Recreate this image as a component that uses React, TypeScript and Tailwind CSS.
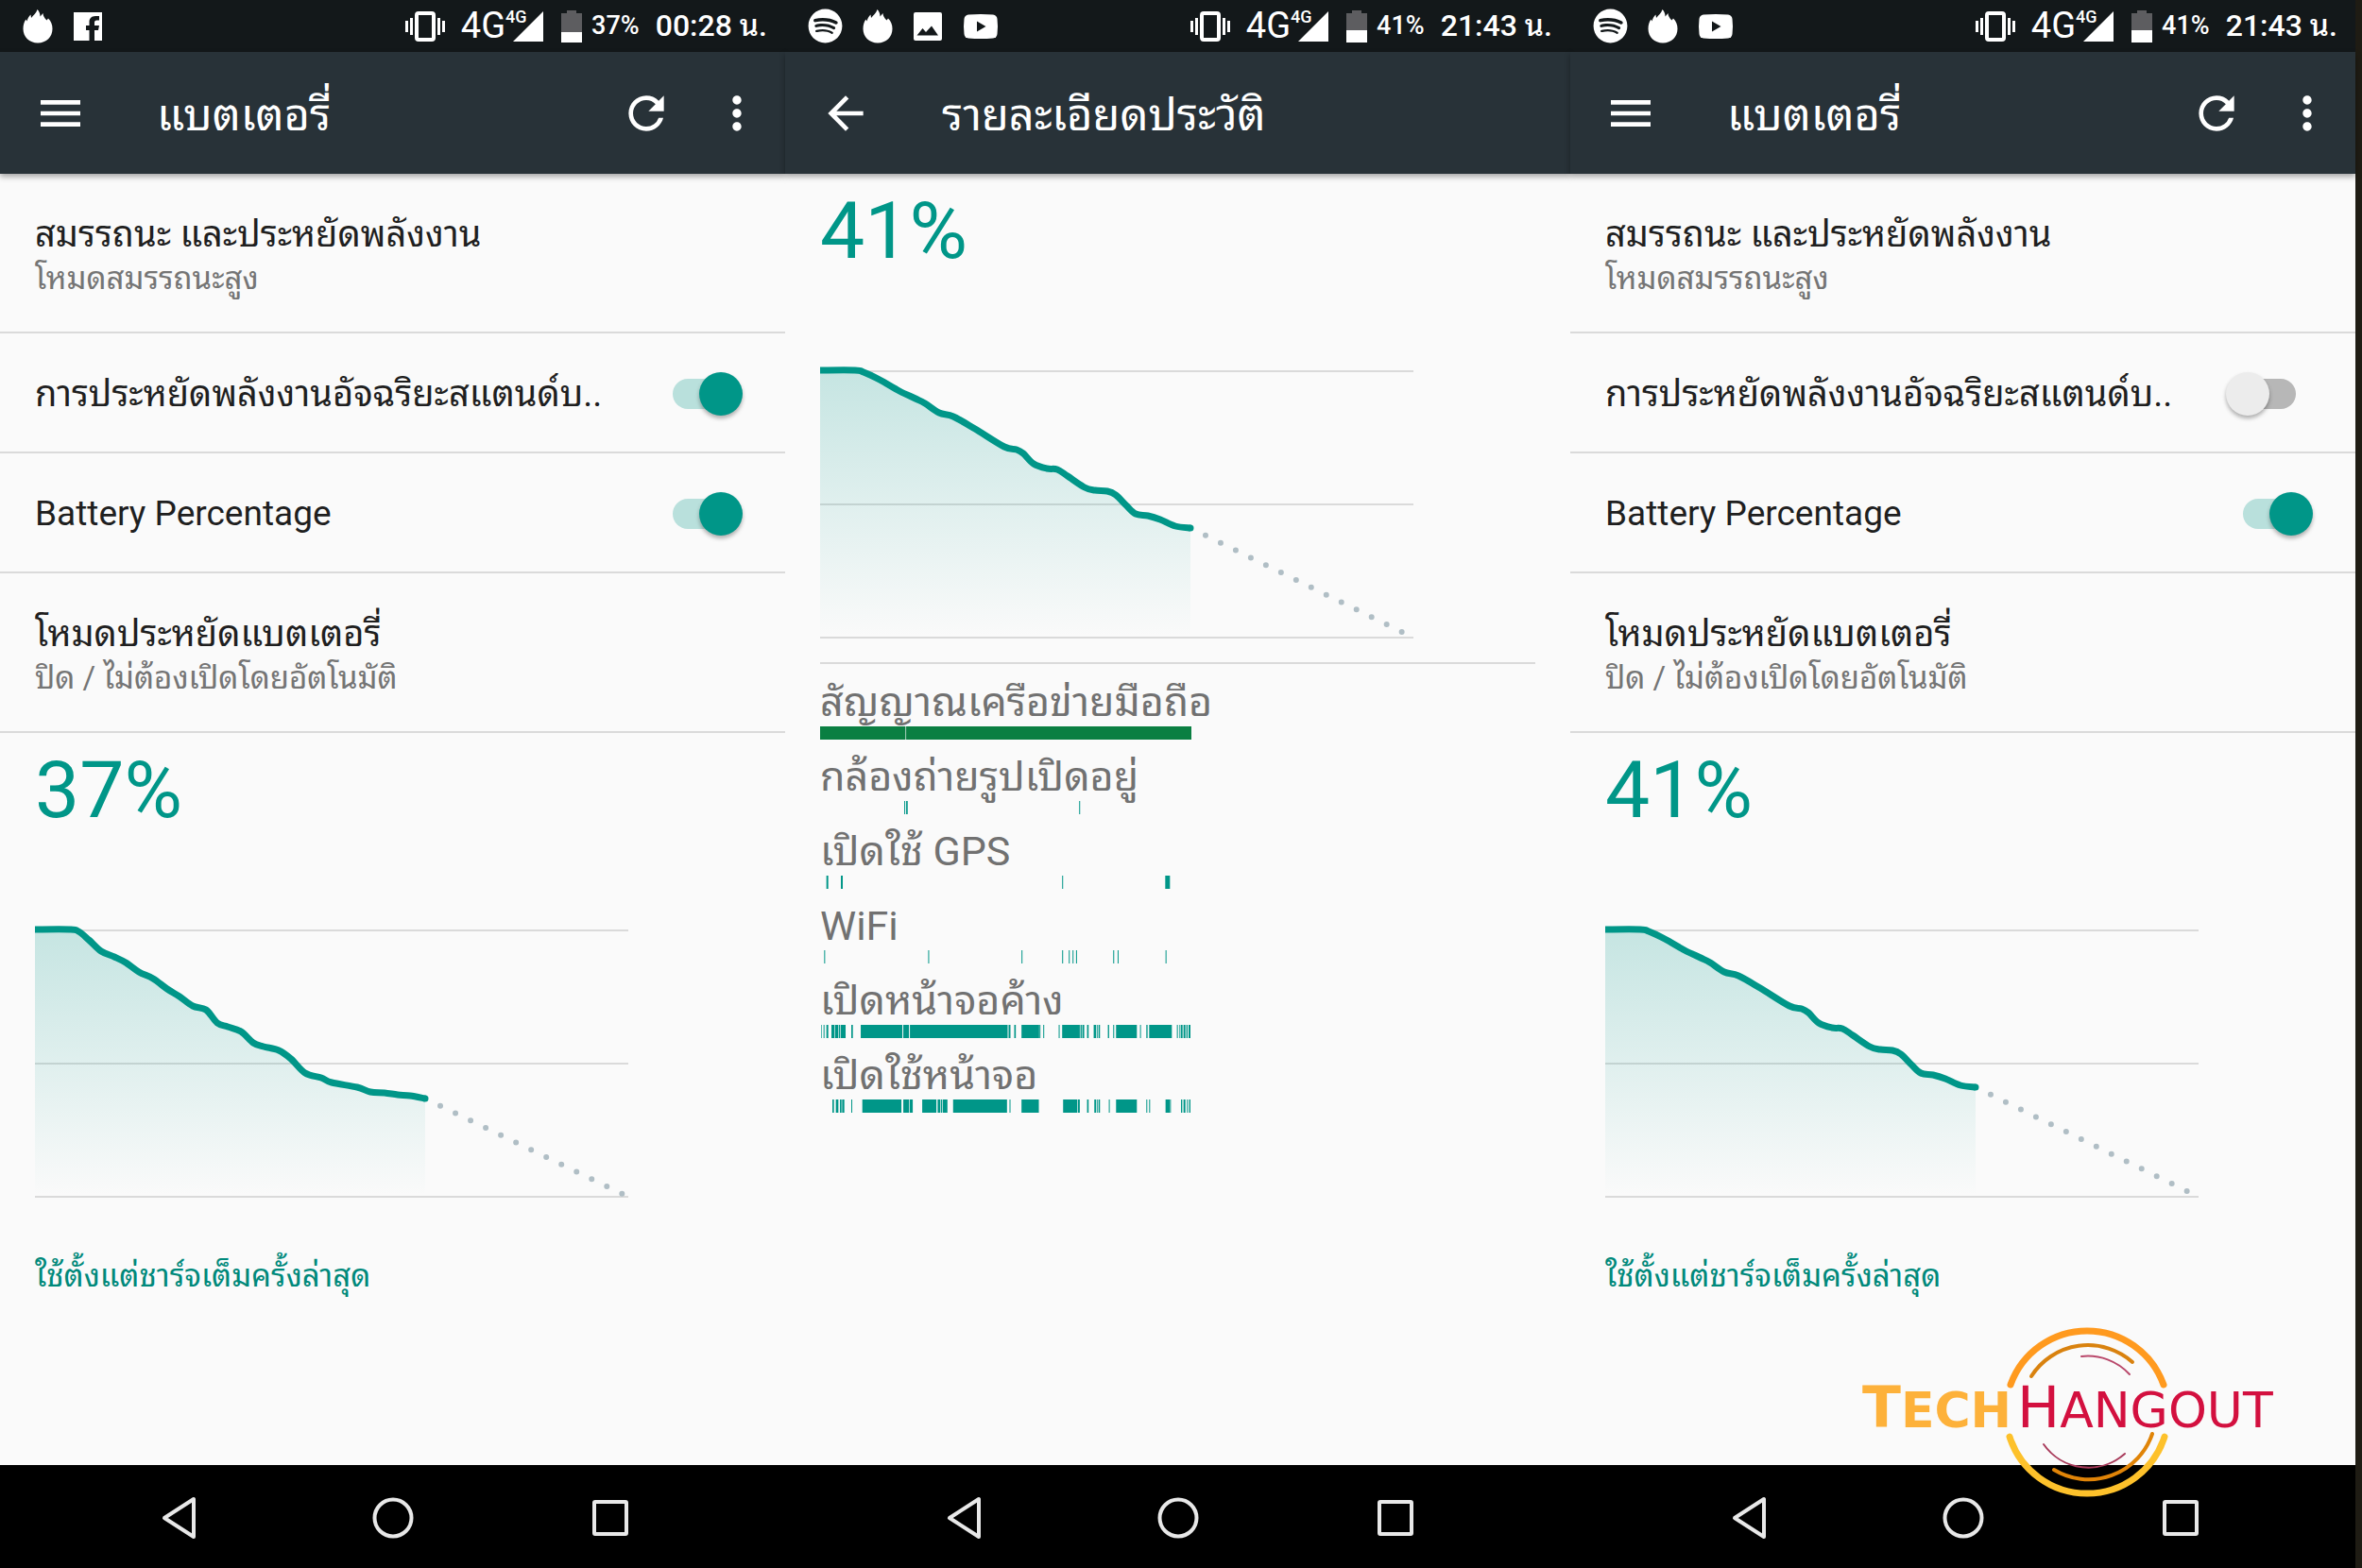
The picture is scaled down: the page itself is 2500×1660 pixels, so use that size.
import React, { useId } from "react";
import { MdMenu, MdArrowBack, MdRefresh, MdMoreVert } from "react-icons/md";
import { FaSpotify } from "react-icons/fa";

type Point = [number, number];
type Range = [number, number];

const CURVE_37: Point[] = [
  [0, -1], [37, -1], [46, 1], [57, 10], [70, 22], [84, 28], [96, 34], [110, 44], [125, 51], [140, 62],
  [153, 70], [167, 80], [181, 84], [193, 98], [204, 102], [218, 107], [231, 119], [242, 123], [258, 127],
  [271, 136], [286, 151], [303, 156], [314, 161], [341, 166], [355, 171], [370, 172], [384, 174], [397, 175], [413, 178],
];

const CURVE_41: Point[] = [
  [0, -1], [37, -1], [46, 1], [63, 9], [84, 21], [101, 29], [111, 34], [126, 44], [141, 48], [164, 61],
  [195, 80], [208, 83], [215, 87], [226, 98], [240, 103], [251, 104], [262, 111], [280, 123], [291, 126],
  [304, 127], [313, 131], [324, 142], [334, 151], [347, 153], [360, 157], [376, 164], [392, 166],
];

function smoothPath(points: Point[]) {
  let d = `M${points[0][0]} ${points[0][1]}`;
  for (let i = 0; i < points.length - 1; i++) {
    const p0 = points[i - 1] ?? points[i];
    const p1 = points[i];
    const p2 = points[i + 1];
    const p3 = points[i + 2] ?? p2;
    d += `C${p1[0] + (p2[0] - p0[0]) / 6} ${p1[1] + (p2[1] - p0[1]) / 6} ${p2[0] - (p3[0] - p1[0]) / 6} ${p2[1] - (p3[1] - p1[1]) / 6} ${p2[0]} ${p2[1]}`;
  }
  return d;
}

function BatteryChart({ points }: { points: Point[] }) {
  const id = useId();
  const d = smoothPath(points);
  const [endX, endY] = points[points.length - 1];
  return (
    <svg viewBox="0 -8 628 294" className="block h-[294px] w-[628px]" role="img" aria-label="Battery level">
      <defs>
        <linearGradient id={id} gradientUnits="userSpaceOnUse" x1="0" y1="0" x2="0" y2="282">
          <stop offset="0" stopColor="#009688" stopOpacity="0.21" />
          <stop offset="1" stopColor="#009688" stopOpacity="0" />
        </linearGradient>
      </defs>
      {[-1, 140, 281].map((y) => (
        <rect key={y} x="0" y={y} width="628" height="2" fill="#dadada" />
      ))}
      <path d={`${d}V278H0Z`} fill={`url(#${id})`} />
      <path
        d={`M${endX} ${endY}L628 282`}
        stroke="#b0bec5"
        strokeWidth="6"
        strokeLinecap="round"
        strokeDasharray="0 17.8"
        fill="none"
      />
      <path d={d} stroke="#009688" strokeWidth="7" fill="none" />
      <circle cx={endX} cy={endY} r="3.5" fill="#009688" />
    </svg>
  );
}

function FlameIcon() {
  return (
    <svg viewBox="0 0 32 36" className="h-9 w-8 fill-white">
      <path d="M16 35.500C7 35.500 .5 29 .5 20.500C.5 16.500 1.500 13 3.500 10.500L4.500 12.500C5 10 6.500 7.500 8.500 5.500L9 9C11 6.500 14.500 4 15.500 0C17.500 2 18.500 4.500 18.500 7.500L21.500 4C21.500 6.500 23 9 25.500 11.500L27 9.500C30 12.500 31.500 16 31.500 20.500C31.500 29 25 35.500 16 35.500Z" />
    </svg>
  );
}

function FacebookIcon() {
  return (
    <svg viewBox="0 0 32 32" className="size-8">
      <path fill="#fff" d="M1 1H31V31H23V20H27L28 15H23V12C23 10.500 23.500 9.500 25.500 9.500H28V5H24C19.500 5 17.500 8 17.500 11V15H14V20H17.500V31H1Z" />
    </svg>
  );
}

function PictureIcon() {
  return (
    <svg viewBox="0 0 32 32" className="size-8">
      <rect x="1" y="1" width="30" height="30" rx="2" fill="#fff" />
      <path d="M4.500 25.500L10.500 18L14 22L20 15.500L27 25.500Z" fill="#13181a" />
    </svg>
  );
}

function PlayIcon() {
  return (
    <svg viewBox="0 0 38 28" className="h-7 w-[38px]">
      <path d="M6 1.500Q19 .5 32 1.500Q36 2 36.500 6Q37.500 14 36.500 22Q36 26 32 26.500Q19 27.500 6 26.500Q2 26 1.500 22Q.5 14 1.500 6Q2 2 6 1.500Z" fill="#fff" />
      <path d="M15 8.500L24.500 14L15 19.500Z" fill="#13181a" />
    </svg>
  );
}

function VibrateIcon() {
  return (
    <svg viewBox="0 0 42 34" className="h-[34px] w-[42px]">
      <rect x="12" y="3" width="18" height="28" rx="2" fill="none" stroke="#fff" strokeWidth="4" />
      <path d="M1.500 11V23M6.500 8V26M35.500 8V26M40.500 11V23" stroke="#fff" strokeWidth="3" />
    </svg>
  );
}

function SignalIcon() {
  return (
    <svg viewBox="0 0 32 32" className="size-8">
      <path d="M32 0V32H0Z" fill="#fff" />
    </svg>
  );
}

function BatteryIcon({ level }: { level: number }) {
  const h = Math.round(level * 0.31);
  return (
    <svg viewBox="0 0 22 34" className="h-[34px] w-[22px]">
      <path d="M6 0H16V3H22V34H0V3H6Z" fill="#5d5d60" />
      <rect x="0" y={34 - h} width="22" height={h} fill="#fff" />
    </svg>
  );
}

function StatusBar({ icons, level, time }: { icons: React.ReactNode; level: number; time: string }) {
  return (
    <div className="flex h-[55px] items-center justify-between bg-[#13181a] pr-[19px] pl-6 text-white">
      <div className="flex items-center gap-[21px]">{icons}</div>
      <div className="flex items-center">
        <VibrateIcon />
        <span className="ml-[17px] text-[38px] leading-[55px]">4G</span>
        <span className="relative ml-2">
          <SignalIcon />
          <span className="absolute -top-1 -left-2 text-[18px] leading-5 font-medium">4G</span>
        </span>
        <span className="ml-[19px]">
          <BatteryIcon level={level} />
        </span>
        <span className="ml-[10px] text-[27px] leading-[55px] font-medium">{level}%</span>
        <span className="ml-[17px] text-[32px] leading-[55px] font-medium">{time} น.</span>
      </div>
    </div>
  );
}

function Toolbar({ title, back = false }: { title: string; back?: boolean }) {
  return (
    <header className="relative z-10 flex h-[129px] items-center bg-[#283238] pr-[23px] pl-9 text-white shadow-[0_3px_6px_rgba(0,0,0,0.35)]">
      <button type="button" aria-label={back ? "Back" : "Menu"}>
        {back ? <MdArrowBack className="size-14" /> : <MdMenu className="size-14" />}
      </button>
      <h1 className="ml-[74px] flex-1 pt-1 text-[47px] leading-[60px] whitespace-nowrap">{title}</h1>
      {!back && (
        <div className="flex gap-10">
          <button type="button" aria-label="Refresh">
            <MdRefresh className="size-14" />
          </button>
          <button type="button" aria-label="More options">
            <MdMoreVert className="size-14" />
          </button>
        </div>
      )}
    </header>
  );
}

function NavBar() {
  return (
    <nav className="flex h-[109px] items-center justify-center gap-[182px] bg-black">
      <button type="button" aria-label="Back">
        <svg viewBox="0 0 48 48" className="size-12">
          <path d="M43 5V45L12 25Z" fill="none" stroke="#e8e8e8" strokeWidth="4" strokeLinejoin="round" />
        </svg>
      </button>
      <button type="button" aria-label="Home">
        <svg viewBox="0 0 48 48" className="size-12">
          <circle cx="24" cy="25" r="19.500" fill="none" stroke="#e8e8e8" strokeWidth="4" />
        </svg>
      </button>
      <button type="button" aria-label="Recent apps">
        <svg viewBox="0 0 48 48" className="size-12">
          <rect x="7" y="8" width="34" height="34" rx="1" fill="none" stroke="#e8e8e8" strokeWidth="4" />
        </svg>
      </button>
    </nav>
  );
}

function LinkRow({ title, detail }: { title: string; detail: string }) {
  return (
    <button type="button" className="flex h-[169px] w-full flex-col items-start border-b-2 border-[#dadada] px-[37px] pt-10 text-left">
      <span className="text-[38px] leading-[48px] text-[#1f1f1f]">{title}</span>
      <span className="text-[33px] leading-[46px] text-[#757575]">{detail}</span>
    </button>
  );
}

function SwitchRow({ title, on, latin = false }: { title: string; on: boolean; latin?: boolean }) {
  return (
    <label className="flex h-[127px] items-center justify-between border-b-2 border-[#dadada] pt-0.5 pr-[45px] pl-[37px]">
      <span className={`${latin ? "text-[37px]" : "text-[38px]"} leading-[48px] whitespace-nowrap text-[#1f1f1f]`}>{title}</span>
      <span className="relative flex h-[46px] w-[92px] items-center justify-center">
        <input type="checkbox" role="switch" defaultChecked={on} className="peer absolute inset-0 size-full opacity-0" />
        <span className="h-8 w-14 rounded-full bg-[#b7b7b7] peer-checked:bg-[#b9e0dc]" />
        <span className="pointer-events-none absolute top-0 left-0 size-[46px] rounded-full bg-[#ececec] shadow-[0_3px_4px_rgba(0,0,0,0.3)] peer-checked:left-[46px] peer-checked:bg-[#009688]" />
      </span>
    </label>
  );
}

function Percent({ value }: { value: number }) {
  return <p className="text-[84px] leading-[98px] text-[#009688]">{value}%</p>;
}

function BatteryScreen({
  icons, level, time, adaptive, points, children,
}: {
  icons: React.ReactNode; level: number; time: string; adaptive: boolean; points: Point[]; children?: React.ReactNode;
}) {
  return (
    <section className="relative flex min-w-0 flex-1 flex-col">
      <StatusBar icons={icons} level={level} time={time} />
      <Toolbar title="แบตเตอรี่" />
      <main className="flex-1">
        <LinkRow title="สมรรถนะ และประหยัดพลังงาน" detail="โหมดสมรรถนะสูง" />
        <SwitchRow title="การประหยัดพลังงานอัจฉริยะสแตนด์บ.." on={adaptive} />
        <SwitchRow title="Battery Percentage" on latin />
        <LinkRow title="โหมดประหยัดแบตเตอรี่" detail="ปิด / ไม่ต้องเปิดโดยอัตโนมัติ" />
        <div className="px-[37px] pt-3">
          <Percent value={level} />
          <div className="mt-[91px]">
            <BatteryChart points={points} />
          </div>
          <p className="mt-14 text-[33px] leading-[48px] text-[#00897b]">ใช้ตั้งแต่ชาร์จเต็มครั้งล่าสุด</p>
        </div>
      </main>
      <NavBar />
      {children}
    </section>
  );
}

/* Activity ranges, in thirds of a pixel along the timeline. */
const HISTORY: { label: string; ranges: Range[]; color?: string }[] = [
  { label: "สัญญาณเครือข่ายมือถือ", ranges: [[0, 271], [273, 1178]], color: "#0a7f42" },
  { label: "กล้องถ่ายรูปเปิดอยู่", ranges: [[267, 270], [273, 278], [822, 825]] },
  { label: "เปิดใช้ GPS", ranges: [[20, 26], [66, 72], [768, 771], [1095, 1110]] },
  {
    label: "WiFi",
    ranges: [[13, 16], [343, 346], [639, 642], [768, 771], [789, 792], [801, 804], [812, 815], [930, 933], [944, 947], [1096, 1099]],
  },
  {
    label: "เปิดหน้าจอค้าง",
    ranges: [
      [4, 6], [11, 14], [20, 26], [36, 46], [48, 58], [60, 64], [66, 81], [99, 104], [129, 261], [264, 282], [285, 595],
      [598, 604], [616, 621], [639, 695], [696, 699], [708, 711], [757, 760], [768, 824], [826, 830], [832, 838], [847, 852],
      [868, 876], [879, 882], [884, 888], [913, 917], [930, 933], [939, 1005], [1015, 1018], [1035, 1039], [1044, 1116],
      [1132, 1135], [1139, 1141], [1144, 1150], [1153, 1159], [1162, 1166], [1169, 1175],
    ],
  },
  {
    label: "เปิดใช้หน้าจอ",
    ranges: [
      [39, 44], [50, 58], [63, 68], [70, 77], [99, 102], [134, 258], [264, 282], [284, 294], [324, 369], [373, 381], [383, 387],
      [389, 404], [422, 593], [601, 604], [639, 694], [771, 816], [818, 824], [847, 852], [870, 876], [879, 882], [884, 888],
      [916, 919], [939, 1005], [1035, 1038], [1044, 1047], [1096, 1109], [1110, 1113], [1145, 1149], [1153, 1159], [1164, 1167],
      [1171, 1175],
    ],
  },
];

function HistoryScreen() {
  return (
    <section className="flex min-w-0 flex-1 flex-col">
      <StatusBar
        icons={<><FaSpotify className="size-[37px]" /><FlameIcon /><PictureIcon /><PlayIcon /></>}
        level={41}
        time="21:43"
      />
      <Toolbar title="รายละเอียดประวัติ" back />
      <main className="flex-1 px-[37px] pt-3">
        <Percent value={41} />
        <div className="mt-[91px]">
          <BatteryChart points={CURVE_41} />
        </div>
        <hr className="mt-[22px] border-t-2 border-[#dadada]" />
        <ul className="pt-[1px]">
          {HISTORY.map(({ label, ranges, color = "#009688" }) => (
            <li key={label} className="h-[79px]">
              <p className="h-[65px] text-[43px] leading-[78px] text-[#717171]">{label}</p>
              <svg viewBox="0 0 1178 14" preserveAspectRatio="none" className="relative block h-[14px] w-[393px]">
                {ranges.map(([from, to]) => (
                  <rect key={from} x={from} y="0" width={to - from} height="14" fill={color} />
                ))}
              </svg>
            </li>
          ))}
        </ul>
      </main>
      <NavBar />
    </section>
  );
}

function Watermark() {
  return (
    <div className="absolute right-[66px] bottom-[75px] h-[180px] w-[456px]">
      <svg viewBox="-90 -90 180 180" className="absolute top-0 left-[148px] size-[180px]" fill="none" strokeLinecap="round">
        <path d="M-81 -29A86 86 0 0 1 81 -29" stroke="#ff9a1f" strokeWidth="7" />
        <path d="M-82 26A86 86 0 0 0 82 26" stroke="#fdc12b" strokeWidth="7" />
        <path d="M-59 -38A71 71 0 0 1 48 -53" stroke="#d9820f" strokeWidth="4" />
        <path d="M-35 61A71 71 0 0 0 69 23" stroke="#e08408" strokeWidth="4" />
        <path d="M-6 -59A60 60 0 0 1 45 -40" stroke="#b9486b" strokeWidth="2" />
        <path d="M-46 34A58 58 0 0 0 40 44" stroke="#a83a5a" strokeWidth="2" />
      </svg>
      <div className="relative flex items-baseline pt-[49px] font-['DejaVu_Sans',sans-serif] text-[52px] leading-[72px] whitespace-nowrap">
        <span className="w-[164px] font-bold text-[#fdb13a]">
          <span className="text-[60px]">T</span>ECH
        </span>
        <span className="text-[#d3103f]">
          <span className="text-[60px]">H</span>ANGOUT
        </span>
      </div>
    </div>
  );
}

export default function App() {
  return (
    <div className="flex min-h-screen bg-[#fafafa] font-[Roboto,'Noto_Sans_Thai_Looped','Noto_Looped_Thai',Loma,Waree,Garuda,'Noto_Sans_Thai','Noto_Sans',sans-serif]">
      <BatteryScreen icons={<><FlameIcon /><FacebookIcon /></>} level={37} time="00:28" adaptive points={CURVE_37} />
      <HistoryScreen />
      <BatteryScreen
        icons={<><FaSpotify className="size-[37px]" /><FlameIcon /><PlayIcon /></>}
        level={41}
        time="21:43"
        adaptive={false}
        points={CURVE_41}
      >
        <Watermark />
      </BatteryScreen>
      <div className="w-[7px] bg-[#1f1c14]" />
    </div>
  );
}
